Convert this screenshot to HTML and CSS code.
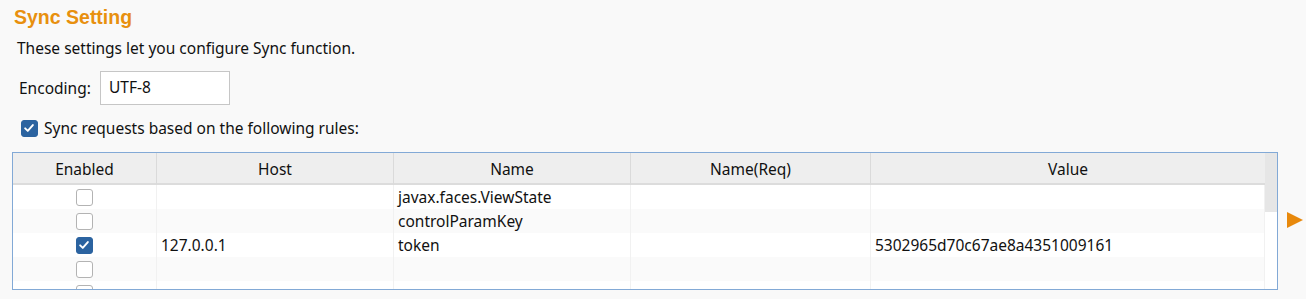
FILE: index.html
```html
<!DOCTYPE html>
<html>
<head>
<meta charset="utf-8">
<link rel="stylesheet" href="styles.css">
</head>
<body>
<div class="page">
  <h1 class="title">Sync Setting</h1>
  <p class="desc">These settings let you configure Sync function.</p>
  <div class="enc-row">
    <span class="enc-label">Encoding:</span>
    <div class="enc-input">UTF-8</div>
  </div>
  <div class="rule-row">
    <span class="cb checked big"><svg viewBox="0 0 16 16"><path d="M3.6 8.4 L6.6 11.3 L12.4 4.6" /></svg></span>
    <span class="rule-label">Sync requests based on the following rules:</span>
  </div>
  <div class="table-wrap">
    <div class="table">
      <div class="thead">
        <div class="th">Enabled</div>
        <div class="th">Host</div>
        <div class="th">Name</div>
        <div class="th">Name(Req)</div>
        <div class="th last">Value</div>
      </div>
      <div class="tbody">
        <div class="tr">
          <div class="td center"><span class="cb"></span></div>
          <div class="td"></div>
          <div class="td">javax.faces.ViewState</div>
          <div class="td"></div>
          <div class="td"></div>
        </div>
        <div class="tr alt">
          <div class="td center"><span class="cb"></span></div>
          <div class="td"></div>
          <div class="td">controlParamKey</div>
          <div class="td"></div>
          <div class="td"></div>
        </div>
        <div class="tr">
          <div class="td center"><span class="cb checked"><svg viewBox="0 0 16 16"><path d="M3.6 8.4 L6.6 11.3 L12.4 4.6" /></svg></span></div>
          <div class="td">127.0.0.1</div>
          <div class="td">token</div>
          <div class="td"></div>
          <div class="td">5302965d70c67ae8a4351009161</div>
        </div>
        <div class="tr alt">
          <div class="td center"><span class="cb"></span></div>
          <div class="td"></div>
          <div class="td"></div>
          <div class="td"></div>
          <div class="td"></div>
        </div>
        <div class="tr">
          <div class="td center"><span class="cb"></span></div>
          <div class="td"></div>
          <div class="td"></div>
          <div class="td"></div>
          <div class="td"></div>
        </div>
      </div>
    </div>
    <div class="scrollbar"><div class="thumb"></div></div>
  </div>
  <div class="arrow"></div>
</div>
</body>
</html>
```
FILE: styles.css
```css
html, body {
  margin: 0;
  padding: 0;
  background: #f9f9f9;
}
body {
  font-family: "Noto Sans", "Open Sans", sans-serif;
  font-size: 15.5px;
  color: #111;
  width: 1306px;
  height: 299px;
  overflow: hidden;
}
.page {
  position: relative;
  padding: 4px 0 0 12px;
}
.title {
  margin: 0 0 0 2px;
  font-family: "Liberation Sans", Arial, sans-serif;
  font-weight: bold;
  font-size: 19.5px;
  line-height: 26px;
  color: #e8900e;
}
.desc {
  margin: 8px 0 0 5px;
  line-height: 20px;
}
.enc-row {
  display: flex;
  align-items: center;
  margin: 13px 0 0 7px;
  height: 34px;
}
.enc-label {
  width: 81px;
}
.enc-input {
  box-sizing: border-box;
  width: 130px;
  height: 34px;
  border: 1.5px solid #c6c6c6;
  background: #fff;
  padding-left: 8px;
  line-height: 31px;
}
.rule-row {
  display: flex;
  align-items: center;
  margin: 14px 0 0 9px;
  height: 18px;
}
.rule-label {
  margin-left: 6px;
}
.cb {
  box-sizing: border-box;
  display: inline-block;
  width: 17px;
  height: 17px;
  border: 1.5px solid #b3b3b3;
  border-radius: 3px;
  background: #fff;
}
.cb.checked {
  background: #2b63a0;
  border-color: #2b63a0;
}
.cb svg {
  display: block;
  width: 14px;
  height: 14px;
}
.cb svg path {
  fill: none;
  stroke: #fff;
  stroke-width: 2.2;
  stroke-linecap: round;
  stroke-linejoin: round;
}
.table-wrap {
  display: flex;
  margin-top: 15px;
  width: 1266px;
  height: 138px;
  box-sizing: border-box;
  border: 1px solid #82a9d6;
  background: #fff;
  overflow: hidden;
}
.table {
  width: 1252px;
  display: flex;
  flex-direction: column;
}
.thead, .tr {
  display: grid;
  grid-template-columns: 144px 237px 237px 240px 394px;
}
.thead {
  height: 30px;
  background: #eeeeee;
  border-bottom: 2px solid #dcdcdc;
}
.th {
  text-align: center;
  line-height: 32px;
  border-right: 1px solid #dadada;
}
.th.last {
  border-right: none;
}
.tr {
  height: 24px;
  background: #fff;
}
.tr.alt {
  background: #fafafa;
}
.td {
  line-height: 24px;
  padding-left: 4px;
  border-right: 1px solid #f1f1f1;
  white-space: nowrap;
  overflow: hidden;
}
.td.center {
  padding-left: 0;
  display: flex;
  align-items: center;
  justify-content: center;
}
.scrollbar {
  width: 12px;
  background: #fff;
}
.thumb {
  height: 59px;
  background: #e6e6e6;
}
.arrow {
  position: absolute;
  left: 1287px;
  top: 212px;
  width: 0;
  height: 0;
  border-top: 8px solid transparent;
  border-bottom: 8px solid transparent;
  border-left: 16px solid #e8890c;
}
```
